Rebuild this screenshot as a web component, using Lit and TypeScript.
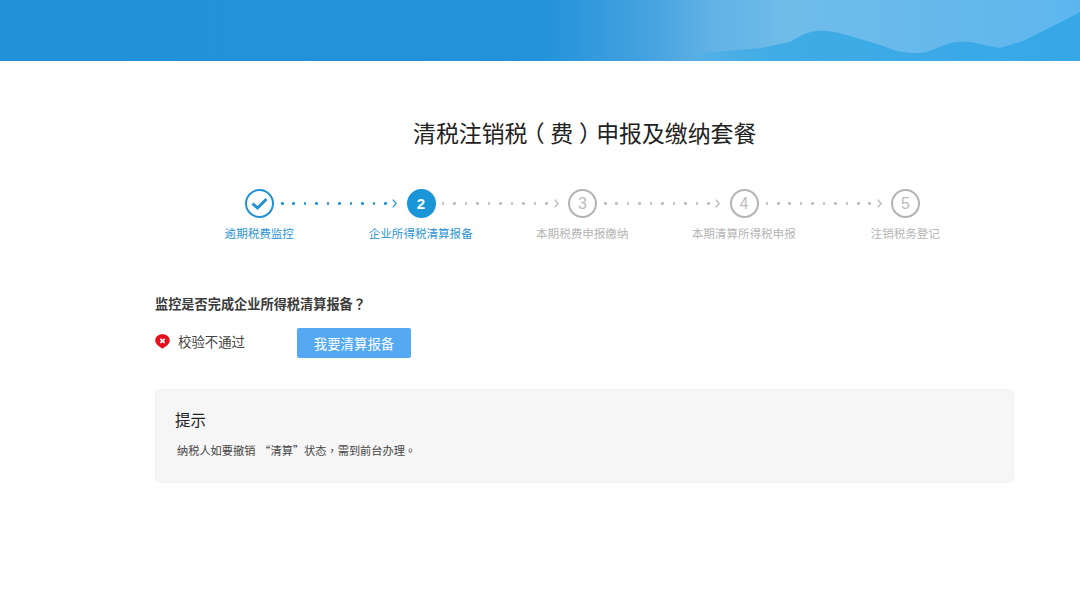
import { LitElement, html, css, svg } from "lit";
import { customElement } from "lit/decorators.js";

const steps = [
  { n: "1", label: "逾期税费监控", state: "done" },
  { n: "2", label: "企业所得税清算报备", state: "active" },
  { n: "3", label: "本期税费申报缴纳", state: "todo" },
  { n: "4", label: "本期清算所得税申报", state: "todo" },
  { n: "5", label: "注销税务登记", state: "todo" },
];

const banner = svg`
  <defs>
    <linearGradient id="sky" x1="0" y1="0" x2="1" y2="0">
      <stop offset="0" stop-color="#2291d9" />
      <stop offset="0.5" stop-color="#2292da" />
      <stop offset="0.6" stop-color="#45a2e0" />
      <stop offset="0.66" stop-color="#62b2e5" />
      <stop offset="0.73" stop-color="#70bce9" />
      <stop offset="1" stop-color="#5cb6ee" />
    </linearGradient>
    <linearGradient id="hill" x1="0" y1="0" x2="1" y2="0">
      <stop offset="0" stop-color="#55b0e6" />
      <stop offset="0.2" stop-color="#40ace6" />
      <stop offset="1" stop-color="#36a7e7" />
    </linearGradient>
  </defs>
  <rect width="1080" height="61" fill="url(#sky)" />
  <path
    d="M695 61 L702 53 L761 48 L790 42 C800 36 808 31 818 31 C832 30 845 35 857 38 L885 46.5 C893 51 905 53 918 53 C930 54 945 42 957 42 C966 41 975 42 984 45 L999 48 L1023 41 L1057 24 L1080 12 V61 Z"
    fill="url(#hill)"
  />
`;

@customElement("app-root")
export class AppRoot extends LitElement {
  static styles = css`
    :host {
      display: block;
      width: 1080px;
      height: 590px;
      overflow: hidden;
      background: #fff;
      color: #333;
      font-family: "Microsoft YaHei", "Noto Sans CJK SC", "Liberation Sans", sans-serif;
    }
    .p {
      font-family: "Noto Sans CJK TC", sans-serif;
    }
    .paren {
      font-feature-settings: "halt";
      padding: 0 0.25em;
    }
    .q {
      padding-left: 4px;
    }
    .banner {
      display: block;
      width: 1080px;
      height: 61px;
    }
    .title {
      margin: 0;
      padding: 54px 0 0 413px;
      font-size: 22.9px;
      line-height: 34px;
      font-weight: 400;
      color: #222;
      white-space: nowrap;
    }
    .track {
      display: flex;
      align-items: center;
      margin: 40px 0 0 245px;
      width: 675px;
    }
    .circle {
      flex: none;
      box-sizing: border-box;
      width: 29px;
      height: 29px;
      border-radius: 50%;
      display: flex;
      align-items: center;
      justify-content: center;
      font-size: 16px;
      border: 2px solid #b4b4b4;
      color: #bcbcbc;
      font-family: "Liberation Sans", sans-serif;
    }
    .circle.active {
      background: #1a96d8;
      border-color: #1a96d8;
      color: #fff;
      font-size: 15px;
      font-weight: 700;
    }
    .circle.done {
      border-color: #2191d4;
    }
    .circle svg {
      display: block;
    }
    .link {
      flex: none;
      box-sizing: border-box;
      width: 132.5px;
      display: flex;
      align-items: center;
      justify-content: space-between;
      padding: 0 9px 0 7px;
    }
    .active + .link {
      padding-left: 6px;
    }
    .dot {
      width: 2.6px;
      height: 2.6px;
      border-radius: 50%;
      background: #bdbdbd;
    }
    .link.on .dot {
      background: #1a96d8;
    }
    .chev {
      display: block;
      margin-left: -3px;
      stroke: #b4b4b4;
    }
    .link.on .chev {
      stroke: #1a96d8;
    }
    .labels {
      display: grid;
      grid-template-columns: repeat(5, 161.5px);
      margin: 6px 0 0 178.5px;
      font-size: 11.55px;
      line-height: 18px;
      color: #b4b4b4;
      text-align: center;
      white-space: nowrap;
    }
    .labels .on {
      color: #2a93d6;
    }
    .body {
      padding: 52px 66px 0 155px;
    }
    .question {
      margin: 0;
      font-size: 13.2px;
      line-height: 20px;
      font-weight: 700;
      color: #3a3a3a;
      white-space: nowrap;
    }
    .result {
      display: flex;
      align-items: center;
      margin-top: 14px;
      height: 30px;
      font-size: 13.4px;
      color: #444;
    }
    .result svg {
      flex: none;
      display: block;
      margin: -3px 8px 0 0;
    }
    .result .text {
      width: 119px;
      margin-top: -4px;
    }
    .btn {
      width: 114px;
      height: 30px;
      border: 0;
      padding: 0;
      border-radius: 2px;
      background: #55a9f2;
      color: #fff;
      font: inherit;
    }
    .tip {
      box-sizing: border-box;
      margin-top: 31px;
      height: 94px;
      padding: 18px 19px;
      background: #f6f6f6;
      border: 1px solid #efefef;
      border-radius: 6px;
    }
    .tip h2 {
      margin: 0;
      font-size: 15.5px;
      line-height: 22px;
      font-weight: 400;
      color: #222;
    }
    .tip p {
      margin: 11px 0 0 2px;
      font-size: 11.2px;
      line-height: 18px;
      color: #444;
      white-space: nowrap;
    }
  `;

  private circle(s: { n: string; state: string }) {
    if (s.state === "done") {
      return html`<div class="circle done">
        <svg width="19" height="15" viewBox="0 0 19 15" fill="none">
          <path d="M2.5 7.5 L7.5 12 L16.5 3" stroke="#2191d4" stroke-width="3" />
        </svg>
      </div>`;
    }
    return html`<div class="circle ${s.state}">${s.n}</div>`;
  }

  private link(on: boolean) {
    return html`<div class="link ${on ? "on" : ""}">
      ${Array.from({ length: 10 }, () => html`<span class="dot"></span>`)}
      <svg class="chev" width="5" height="9" viewBox="0 0 5 9" fill="none">
        <path d="M0.7 0.7 L4.2 4.5 L0.7 8.3" stroke-width="1.2" />
      </svg>
    </div>`;
  }

  render() {
    return html`
      <svg class="banner" viewBox="0 0 1080 61" preserveAspectRatio="none">${banner}</svg>
      <h1 class="title">清税注销税<span class="paren">（</span>费<span class="paren">）</span>申报及缴纳套餐</h1>
      <div class="track">
        ${steps.map(
          (s, i) => html`${this.circle(s)}${i < steps.length - 1 ? this.link(i === 0) : ""}`
        )}
      </div>
      <div class="labels">
        ${steps.map(
          (s) => html`<div class=${s.state === "todo" ? "" : "on"}>${s.label}</div>`
        )}
      </div>
      <div class="body">
        <p class="question">监控是否完成企业所得税清算报备<span class="p">？</span></p>
        <div class="result">
          <svg width="15" height="15" viewBox="0 0 14 15" preserveAspectRatio="none">
            <path
              d="M7 0.3 C10.8 0.3 13.8 3 13.8 6.6 C13.8 10.2 10 12.6 7 14.8 C4 12.6 0.2 10.2 0.2 6.6 C0.2 3 3.2 0.3 7 0.3 Z"
              fill="#e60f1b"
            />
            <path d="M5 4.9 L9 8.9 M9 4.9 L5 8.9" stroke="#fff" stroke-width="1.5" />
          </svg>
          <span class="text">校验不通过</span>
          <button class="btn">我要清算报备</button>
        </div>
        <div class="tip">
          <h2>提示</h2>
          <p>纳税人如要撤销<span class="q">“</span>清算”状态<span class="p">，</span>需到前台办理<span class="p">。</span></p>
        </div>
      </div>
    `;
  }
}
